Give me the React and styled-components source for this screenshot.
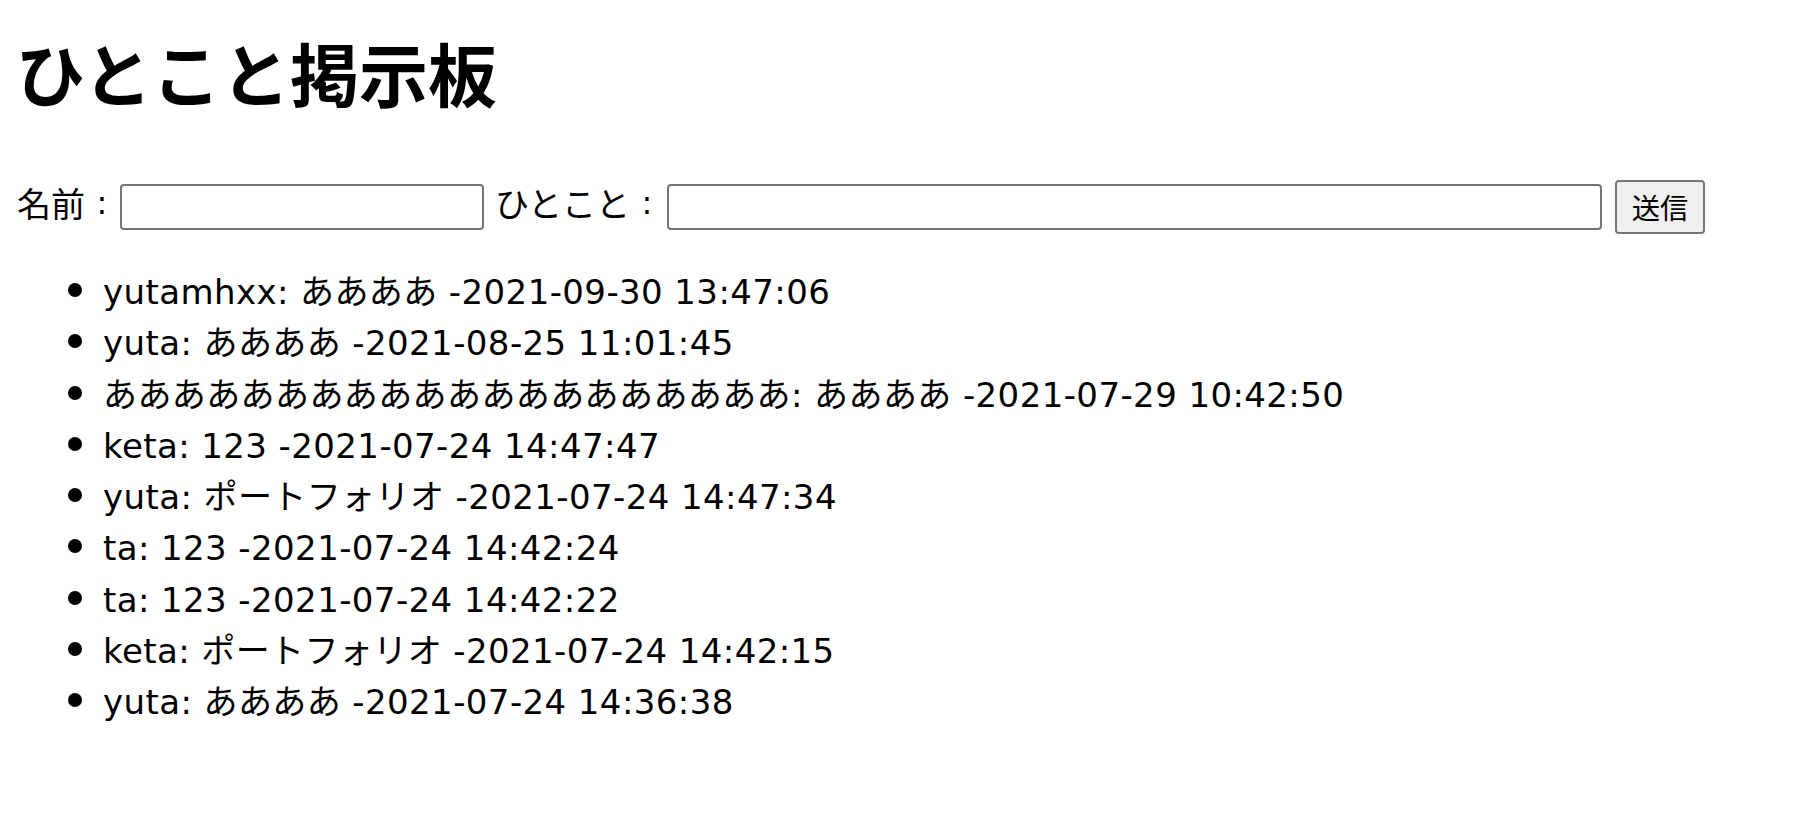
import React from "react";
import styled, { createGlobalStyle } from "styled-components";

const GlobalStyle = createGlobalStyle`
  html, body {
    margin: 0;
    padding: 0;
    background: #ffffff;
  }
  body {
    font-family: "DejaVu Sans", "Noto Sans CJK JP", sans-serif;
    color: #000000;
  }
`;

const Page = styled.div`
  padding: 0 17px;
`;

const Title = styled.h1`
  margin: 38px 0 0 -1px;
  font-family: "Noto Sans CJK JP", sans-serif;
  font-size: 69px;
  line-height: 68px;
  font-weight: 700;
`;

const Form = styled.form`
  display: flex;
  align-items: center;
  margin-top: 74px;
  height: 54px;
`;

const Label = styled.span`
  display: inline-flex;
  align-items: center;
  font-family: "Noto Sans CJK JP", sans-serif;
  font-size: 34px;
  line-height: 34px;
  padding-bottom: 9px;
  margin-right: ${(p) => p.$after}px;
  white-space: nowrap;
`;

const Colon = styled.span`
  display: inline-block;
  width: 34px;
  text-align: center;
  font-family: "DejaVu Sans", sans-serif;
  font-size: 32px;
`;

const TextInput = styled.input`
  box-sizing: border-box;
  width: ${(p) => p.$w}px;
  height: 46px;
  margin: 0 ${(p) => p.$after}px 0 0;
  padding: 2px 4px;
  border: 2px solid #767676;
  border-radius: 4px;
  background: #ffffff;
  font-family: "Noto Sans CJK JP", sans-serif;
  font-size: 28px;
  outline: none;
`;

const SubmitButton = styled.button`
  box-sizing: border-box;
  width: 90px;
  height: 54px;
  margin: 0;
  padding: 0;
  border: 2px solid #767676;
  border-radius: 4px;
  background: #efefef;
  color: #000000;
  font-family: "Noto Sans CJK JP", sans-serif;
  font-size: 28.3px;
  line-height: 1;
`;

const PostList = styled.ul`
  margin: 29px 0 34px;
  padding-left: 86px;
  font-size: 34px;
`;

const PostItem = styled.li`
  height: 51.3px;
  line-height: 51px;
  letter-spacing: 0.4px;

  &::marker {
    font-family: "Noto Sans CJK JP", sans-serif;
    font-size: 36px;
  }
`;

const posts = [
  { name: "yutamhxx", body: "ああああ", at: "2021-09-30 13:47:06" },
  { name: "yuta", body: "ああああ", at: "2021-08-25 11:01:45" },
  { name: "ああああああああああああああああああああ", body: "ああああ", at: "2021-07-29 10:42:50" },
  { name: "keta", body: "123", at: "2021-07-24 14:47:47" },
  { name: "yuta", body: "ポートフォリオ", at: "2021-07-24 14:47:34" },
  { name: "ta", body: "123", at: "2021-07-24 14:42:24" },
  { name: "ta", body: "123", at: "2021-07-24 14:42:22" },
  { name: "keta", body: "ポートフォリオ", at: "2021-07-24 14:42:15" },
  { name: "yuta", body: "ああああ", at: "2021-07-24 14:36:38" },
];

export default function App() {
  return (
    <Page>
      <GlobalStyle />
      <Title>ひとこと掲示板</Title>
      <Form onSubmit={(e) => e.preventDefault()}>
        <Label $after={1}>
          名前<Colon>:</Colon>
        </Label>
        <TextInput type="text" $w={364} $after={11} />
        <Label $after={3}>
          ひとこと<Colon>:</Colon>
        </Label>
        <TextInput type="text" $w={935} $after={13} />
        <SubmitButton type="submit">送信</SubmitButton>
      </Form>
      <PostList>
        {posts.map((p, i) => (
          <PostItem key={i}>
            {p.name}: {p.body} -{p.at}
          </PostItem>
        ))}
      </PostList>
    </Page>
  );
}
